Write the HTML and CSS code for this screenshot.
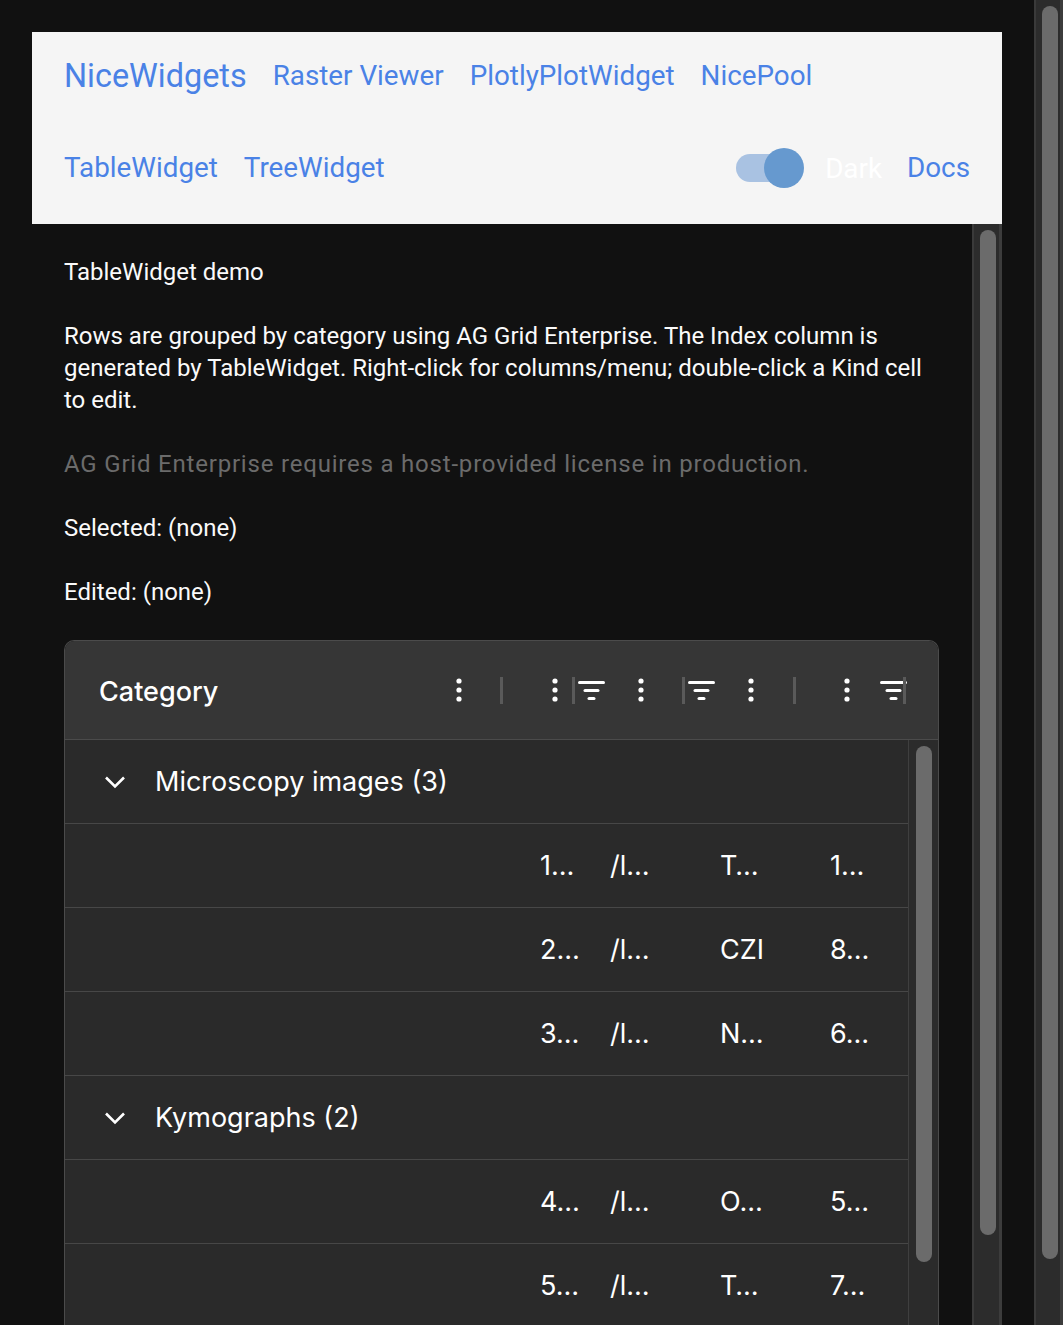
FILE: index.html
```html
<!DOCTYPE html>
<html lang="en">
<head>
    <meta charset="UTF-8">
    <meta name="viewport" content="width=device-width, initial-scale=1.0">
    <title>TableWidget demo</title>
    <link rel="stylesheet" href="styles.css">
</head>
<body>
    <div class="page">
        <header class="top-bar">
            <nav class="nav-row">
                <a class="brand" href="#">NiceWidgets</a>
                <a class="nav-link" href="#">Raster Viewer</a>
                <a class="nav-link" href="#">PlotlyPlotWidget</a>
                <a class="nav-link" href="#">NicePool</a>
            </nav>
            <div class="nav-row nav-row-2">
                <a class="nav-link" href="#">TableWidget</a>
                <a class="nav-link" href="#">TreeWidget</a>
                <div class="nav-right">
                    <div class="toggle">
                        <span class="toggle-track"></span>
                        <span class="toggle-thumb"></span>
                    </div>
                    <span class="dark-label">Dark</span>
                    <a class="nav-link" href="#">Docs</a>
                </div>
            </div>
        </header>

        <div class="scroller">
            <main class="content">
                <p>TableWidget demo</p>
                <p>Rows are grouped by category using AG Grid Enterprise. The Index column is generated by TableWidget. Right-click for columns/menu; double-click a Kind cell to edit.</p>
                <p class="muted">AG Grid Enterprise requires a host-provided license in production.</p>
                <p>Selected: (none)</p>
                <p>Edited: (none)</p>

                <div class="grid">
                    <div class="grid-header">
                        <div class="hcell hc-1">
                            <span class="hlabel">Category</span>
                            <svg class="dots" width="6" height="24" viewBox="0 0 6 24"><circle cx="3" cy="3" r="2.6"/><circle cx="3" cy="12" r="2.6"/><circle cx="3" cy="21" r="2.6"/></svg>
                            <span class="resize"></span>
                        </div>
                        <div class="hcell hc-2">
                            <svg class="dots" width="6" height="24" viewBox="0 0 6 24"><circle cx="3" cy="3" r="2.6"/><circle cx="3" cy="12" r="2.6"/><circle cx="3" cy="21" r="2.6"/></svg>
                            <span class="resize"></span>
                        </div>
                        <div class="hcell hc-3">
                            <svg class="filter" width="27" height="21" viewBox="0 0 27 21"><rect x="0" y="1" width="27" height="3" rx="1.5"/><rect x="5.5" y="9" width="16" height="3" rx="1.5"/><rect x="9.5" y="17" width="8" height="3" rx="1.5"/></svg>
                            <svg class="dots" width="6" height="24" viewBox="0 0 6 24"><circle cx="3" cy="3" r="2.6"/><circle cx="3" cy="12" r="2.6"/><circle cx="3" cy="21" r="2.6"/></svg>
                            <span class="resize"></span>
                        </div>
                        <div class="hcell hc-4">
                            <svg class="filter" width="27" height="21" viewBox="0 0 27 21"><rect x="0" y="1" width="27" height="3" rx="1.5"/><rect x="5.5" y="9" width="16" height="3" rx="1.5"/><rect x="9.5" y="17" width="8" height="3" rx="1.5"/></svg>
                            <svg class="dots" width="6" height="24" viewBox="0 0 6 24"><circle cx="3" cy="3" r="2.6"/><circle cx="3" cy="12" r="2.6"/><circle cx="3" cy="21" r="2.6"/></svg>
                            <span class="resize"></span>
                        </div>
                        <div class="hcell hc-5">
                            <svg class="dots" width="6" height="24" viewBox="0 0 6 24"><circle cx="3" cy="3" r="2.6"/><circle cx="3" cy="12" r="2.6"/><circle cx="3" cy="21" r="2.6"/></svg>
                            <svg class="filter" width="27" height="21" viewBox="0 0 27 21"><rect x="0" y="1" width="27" height="3" rx="1.5"/><rect x="5.5" y="9" width="16" height="3" rx="1.5"/><rect x="9.5" y="17" width="8" height="3" rx="1.5"/></svg>
                            <span class="resize"></span>
                        </div>
                    </div>

                    <div class="grid-body">
                        <div class="rows">
                            <div class="row group-row">
                                <svg class="chevron" width="22" height="14" viewBox="0 0 22 14"><path d="M2 2.5 L11 11.5 L20 2.5"/></svg>
                                <span>Microscopy images (3)</span>
                            </div>
                            <div class="row">
                                <div class="cell c-group"></div>
                                <div class="cell c-2">1…</div>
                                <div class="cell c-3">/l…</div>
                                <div class="cell c-4">T…</div>
                                <div class="cell c-5">1…</div>
                            </div>
                            <div class="row">
                                <div class="cell c-group"></div>
                                <div class="cell c-2">2…</div>
                                <div class="cell c-3">/l…</div>
                                <div class="cell c-4">CZI</div>
                                <div class="cell c-5">8…</div>
                            </div>
                            <div class="row">
                                <div class="cell c-group"></div>
                                <div class="cell c-2">3…</div>
                                <div class="cell c-3">/l…</div>
                                <div class="cell c-4">N…</div>
                                <div class="cell c-5">6…</div>
                            </div>
                            <div class="row group-row">
                                <svg class="chevron" width="22" height="14" viewBox="0 0 22 14"><path d="M2 2.5 L11 11.5 L20 2.5"/></svg>
                                <span>Kymographs (2)</span>
                            </div>
                            <div class="row">
                                <div class="cell c-group"></div>
                                <div class="cell c-2">4…</div>
                                <div class="cell c-3">/l…</div>
                                <div class="cell c-4">O…</div>
                                <div class="cell c-5">5…</div>
                            </div>
                            <div class="row">
                                <div class="cell c-group"></div>
                                <div class="cell c-2">5…</div>
                                <div class="cell c-3">/l…</div>
                                <div class="cell c-4">T…</div>
                                <div class="cell c-5">7…</div>
                            </div>
                        </div>
                        <div class="grid-vbar"><div class="thumb"></div></div>
                    </div>
                </div>
            </main>
            <div class="scrollbar inner-bar"><div class="thumb"></div></div>
        </div>
    </div>
    <div class="scrollbar page-bar"><div class="thumb"></div></div>
</body>
</html>
```

FILE: styles.css
```css
html, body {
    height: 100%;
}
body {
    margin: 0;
    display: flex;
    background-color: #111;
    font-family: Roboto, "Liberation Sans", sans-serif;
    color: #fafafa;
    overflow: hidden;
}
.page {
    flex: 1;
    display: flex;
    flex-direction: column;
    padding: 32px 32px 0 32px;
    min-width: 0;
}

/* header */
.top-bar {
    background-color: #f5f5f5;
    padding: 0 32px 8px 32px;
}
.nav-row {
    display: flex;
    align-items: center;
    gap: 26px;
    height: 88px;
}
.nav-row-2 {
    height: 96px;
}
.top-bar a {
    color: #4a82e6;
    text-decoration: none;
    font-size: 27.8px;
    line-height: 1;
}
.top-bar .brand {
    font-size: 32.4px;
}
.nav-right {
    margin-left: auto;
    display: flex;
    align-items: center;
}
.toggle {
    display: flex;
    align-items: center;
    margin-right: 21px;
}
.toggle-track {
    width: 60px;
    height: 28px;
    border-radius: 14px;
    background-color: #a9c2e2;
}
.toggle-thumb {
    width: 40px;
    height: 40px;
    border-radius: 50%;
    background-color: #6699cf;
    margin-left: -32px;
}
.dark-label {
    color: #fff;
    font-size: 27.8px;
    margin-right: 25px;
}

/* scroll area */
.scroller {
    flex: 1;
    display: flex;
    min-height: 0;
    overflow: hidden;
}
.content {
    flex: 1;
    display: flex;
    flex-direction: column;
    gap: 32px;
    padding: 32px 33px 0 32px;
    min-width: 0;
    font-size: 24px;
    line-height: 32px;
}
.content p {
    margin: 0;
}
.muted {
    color: #6b6b6b;
    letter-spacing: 0.8px;
}

.scrollbar {
    box-sizing: border-box;
    background-color: #2c2c2c;
    border-left: 2px solid #3a3a3a;
    border-right: 3px solid #3c3c3c;
    padding: 6px 0 0 6px;
}
.scrollbar .thumb {
    width: 16px;
    border-radius: 8px;
    background-color: #6b6b6b;
}
.inner-bar {
    width: 30px;
}
.inner-bar .thumb {
    height: 1005px;
}
.page-bar {
    width: 29px;
    flex-shrink: 0;
}
.page-bar .thumb {
    height: 1253px;
}

/* grid */
.grid {
    width: 875px;
    flex-shrink: 0;
    box-sizing: border-box;
    border: 1px solid #4b4b4b;
    border-bottom: none;
    border-radius: 10px 10px 0 0;
    overflow: hidden;
    font-family: Inter, "Noto Sans", sans-serif;
    font-size: 27px;
    line-height: 1;
    color: #fff;
}
.grid-header {
    display: flex;
    height: 99px;
    box-sizing: border-box;
    background-color: #363636;
    border-bottom: 1px solid #4b4b4b;
}
.hcell {
    display: flex;
    align-items: center;
    flex-shrink: 0;
}
.hcell svg {
    fill: #fff;
    flex-shrink: 0;
}
.resize {
    width: 3px;
    height: 27px;
    background-color: #5a5a5a;
    flex-shrink: 0;
}
.hlabel {
    font-weight: 500;
    padding-top: 2px;
}
.hc-1 {
    width: 438px;
    padding-left: 34px;
    box-sizing: border-box;
}
.hc-1 .dots {
    margin-left: auto;
    margin-right: 38px;
}
.hc-2 {
    width: 72px;
}
.hc-2 .dots {
    margin-left: 49px;
    margin-right: 14px;
}
.hc-3, .hc-4 {
    width: 110px;
}
.hc-3 .filter, .hc-4 .filter {
    margin-left: 3px;
}
.hc-3 .dots, .hc-4 .dots {
    margin-left: 33px;
    margin-right: 38px;
}
.hc-4 {
    width: 111px;
}
.hc-4 .dots {
    margin-right: 39px;
}
.hc-5 {
    width: 110px;
}
.hc-5 .dots {
    margin-left: 48px;
    margin-right: 30px;
}
.hc-5 .resize {
    margin-left: -4px;
}

.grid-body {
    display: flex;
    height: 640px;
}
.rows {
    flex: 1;
    background-color: #2a2a2a;
}
.row {
    display: flex;
    align-items: center;
    height: 84px;
    box-sizing: border-box;
    border-bottom: 1px solid #474747;
}
.group-row {
    padding-left: 39px;
    gap: 29px;
}
.chevron {
    fill: none;
    stroke: #fff;
    stroke-width: 2.6;
}
.cell {
    flex-shrink: 0;
    box-sizing: border-box;
    padding-left: 36px;
    white-space: nowrap;
}
.c-group {
    width: 439px;
}
.c-2 {
    width: 70px;
}
.c-3, .c-4, .c-5 {
    width: 110px;
}
.grid-vbar {
    width: 30px;
    box-sizing: border-box;
    background-color: #2b2b2b;
    border-left: 1px solid #3f3f3f;
    padding: 6px 0 0 7px;
}
.grid-vbar .thumb {
    width: 16px;
    height: 516px;
    border-radius: 8px;
    background-color: #6b6b6b;
}
```
